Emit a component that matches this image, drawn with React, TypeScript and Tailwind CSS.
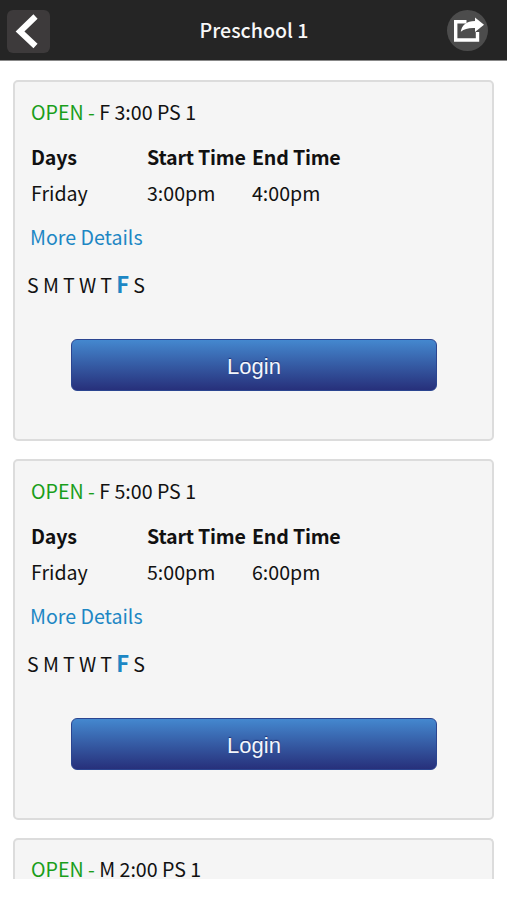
type ClassInfo = { title: string; start?: string; end?: string };

const classes: ClassInfo[] = [
  { title: "F 3:00 PS 1", start: "3:00pm", end: "4:00pm" },
  { title: "F 5:00 PS 1", start: "5:00pm", end: "6:00pm" },
  { title: "M 2:00 PS 1" },
];

function Card({ title, start, end }: ClassInfo) {
  return (
    <section className="h-[361px] shrink-0 rounded-[5px] border-2 border-[#dcdcdc] bg-[#f5f5f5] pt-[20px] pl-[16px] text-[19.6px] leading-[30px] whitespace-nowrap text-[#111] last:h-[41px] last:rounded-b-none last:border-b-0 last:pt-[19px]">
      <h2 className="leading-[20px]">
        <span className="text-[#1a9e1a]">OPEN -</span> {title}
      </h2>
      {start && (
        <>
          <div className="mt-[17px] grid grid-cols-[116px_105px_100px] leading-[36px]">
            <b className="tracking-[-0.2px]">Days</b>
            <b className="tracking-[-0.2px]">Start Time</b>
            <b className="tracking-[-0.2px]">End Time</b>
            <span>Friday</span>
            <span>{start}</span>
            <span>{end}</span>
          </div>
          <a className="mt-[11px] -ml-px block text-[#1d87c4]">More Details</a>
          <div className="mt-[18px] -ml-[4px] flex h-[30px] gap-[4.2px]">
            <span>S</span>
            <span>M</span>
            <span>T</span>
            <span>W</span>
            <span>T</span>
            <b className="-mt-[2px] text-[22px] text-[#1d87c4]">F</b>
            <span>S</span>
          </div>
          <button className="mt-[39px] ml-[40px] block h-[52px] w-[366px] rounded-[6px] border border-[#2b4590] bg-linear-to-b from-[#4488cf] to-[#27307b] pt-[3px] font-['Liberation_Sans',Arial,sans-serif] text-[22px] text-[#f3f6fc] [text-shadow:0_-1px_1px_#1d2f70]">
            Login
          </button>
        </>
      )}
    </section>
  );
}

export default function App() {
  return (
    <div className="flex h-[900px] w-[507px] flex-col overflow-hidden bg-white font-['Noto_Sans_CJK_SC','Noto_Sans',sans-serif]">
      <header className="grid h-[61px] shrink-0 grid-cols-[43px_1fr_43px] items-center border-b border-[#888] bg-[#252525] pr-[17px] pl-[7px]">
        <button className="mt-[2px] h-[43px] w-[43px] rounded-[6px] bg-[#3d3a3b]">
          <svg width="43" height="43" viewBox="0 0 43 43" fill="none">
            <path d="M28.500 6.500 13 21.500l15.500 14.500" stroke="#fff" strokeWidth="6" />
          </svg>
        </button>
        <h1 className="pl-[11px] text-center text-[19.600px] leading-[30px] font-medium text-[#f8f8f8]">Preschool 1</h1>
        <button className="mt-px h-[41px] w-[41px] rounded-full bg-[#4c4c4c]">
          <svg width="41" height="41" viewBox="0 0 41 41" fill="none">
            <path d="M19.500 11.700H8.700v18.300h21.800v-8" stroke="#fff" strokeWidth="3.400" />
            <path d="M13.800 21.800c1-6.800 5.500-10.600 14.200-10.800V7.500l9 7.300-9 7.200v-4c-6.500-.3-10.500.8-14.200 3.800Z" fill="#fff" />
          </svg>
        </button>
      </header>
      <main className="flex flex-col gap-[18px] px-[13px] pt-[19px]">
        {classes.map((c) => (
          <Card key={c.title} {...c} />
        ))}
      </main>
    </div>
  );
}
